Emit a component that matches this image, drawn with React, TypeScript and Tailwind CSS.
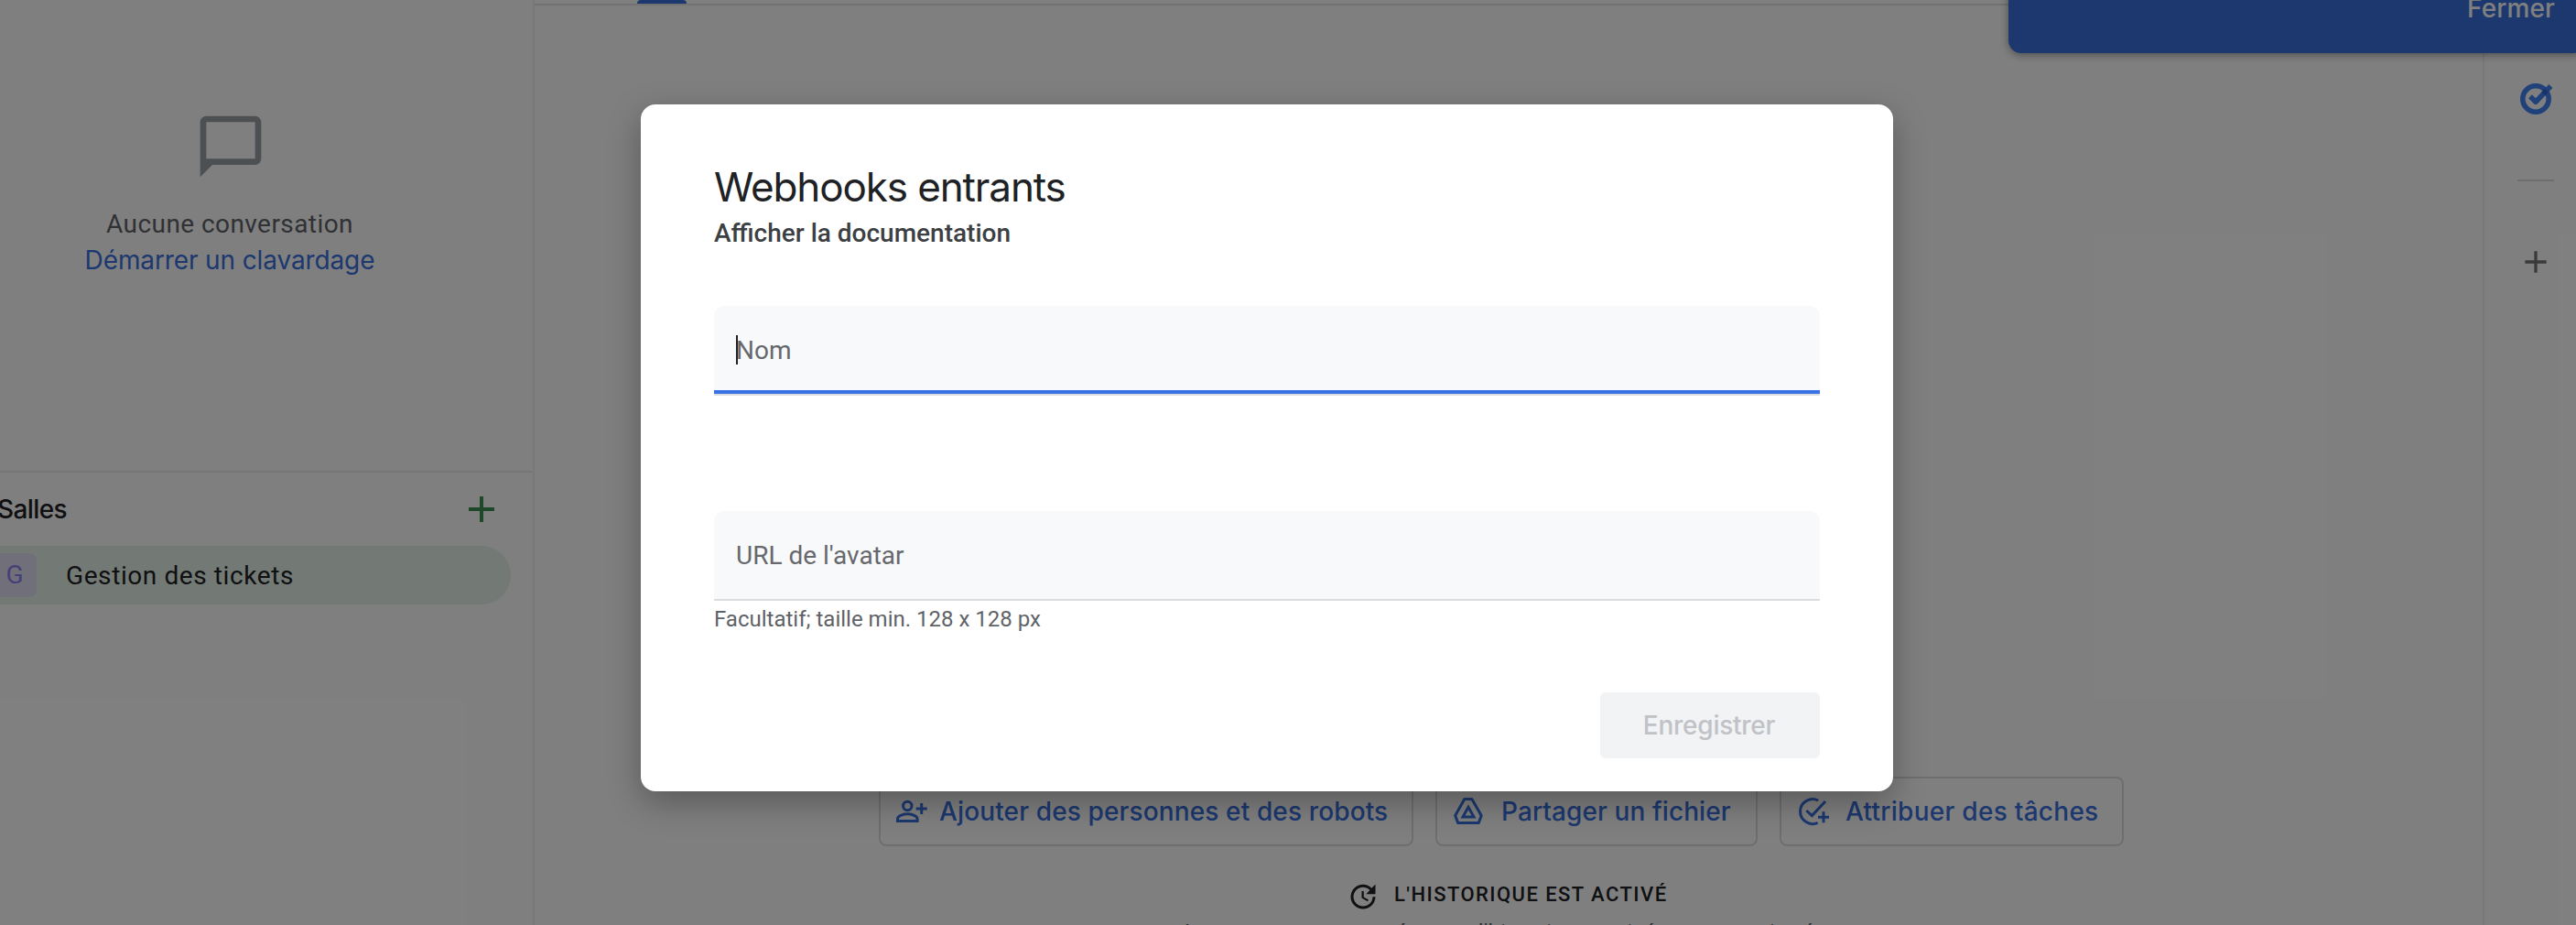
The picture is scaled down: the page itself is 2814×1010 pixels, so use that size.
import React from "react";

function Field({ label, focused }: { label: string; focused?: boolean }) {
  return (
    <div className="flex h-[98px] flex-col overflow-hidden rounded-t-[10px] bg-[#f8f9fb]">
      <div className={focused ? "flex h-[92px] items-center pl-6 pt-1" : "flex h-24 items-center pl-6"}>
        {focused && <span className="-mr-0.5 h-8 w-0.5 bg-[#202124]" />}
        <span className="pt-0.5 text-[28px] leading-10 text-[#66686c]">{label}</span>
      </div>
      {focused && <div className="h-1 bg-[#3973e3]" />}
      <div className="h-0.5 bg-[#dadce0]" />
    </div>
  );
}

function Action({
  className,
  textClass,
  label,
  children,
}: {
  className: string;
  textClass: string;
  label: string;
  children: React.ReactNode;
}) {
  return (
    <div
      className={
        "flex h-[76px] shrink-0 items-center rounded-lg border-2 border-[#dadce0] pl-3.5 text-[#3870de] " + className
      }
    >
      <svg className="h-9 w-10 shrink-0" viewBox="0 0 40 36" fill="none" stroke="currentColor" strokeWidth="3">
        {children}
      </svg>
      <span className={"whitespace-nowrap font-['Inter',sans-serif] text-[28px] font-medium leading-10 " + textClass}>
        {label}
      </span>
    </div>
  );
}

function Sidebar() {
  return (
    <aside className="flex w-[584px] shrink-0 flex-col border-r-2 border-[#f0f0f0]">
      <div className="flex h-[516px] shrink-0 flex-col items-center border-b-2 border-[#ececec] pr-[80px] pt-[120px]">
        <svg className="ml-0.5 h-20 w-20" viewBox="0 0 24 24" fill="#9aa0a6">
          <path d="M20 2H4c-1.100 0-2 .9-2 2v18l4-4h14c1.100 0 2-.9 2-2V4c0-1.100-.9-2-2-2zm0 14H4V4h16v12z" />
        </svg>
        <p className="mt-[25px] text-[28px] leading-10 tracking-[0.43px] text-[#5f6368]">Aucune conversation</p>
        <p className="-mt-px font-['Inter',sans-serif] text-[28px] leading-10 tracking-[-0.12px] text-[#3870de]">
          Démarrer un clavardage
        </p>
      </div>
      <div className="flex h-20 shrink-0 items-center justify-between pr-8">
        <span className="-ml-[3px] font-['Inter',sans-serif] text-[28px] font-medium leading-10 tracking-[-0.6px] text-[#202124]">
          Salles
        </span>
        <svg className="h-12 w-12" viewBox="0 0 24 24" fill="#3f8f55">
          <path d="M19 13h-6v6h-2v-6H5v-2h6V5h2v6h6v2z" />
        </svg>
      </div>
      <div className="flex h-16 w-[558px] shrink-0 items-center rounded-r-full bg-[#e6f4ea]">
        <span className="-ml-2 flex h-12 w-12 items-center justify-center rounded-lg bg-[#e2dff2] text-[28px] text-[#8a80ee]">
          G
        </span>
        <span className="ml-8 pt-0.5 text-[28px] leading-10 tracking-[0.59px] text-[#202124]">Gestion des tickets</span>
      </div>
    </aside>
  );
}

function Conversation() {
  return (
    <main className="flex min-w-0 flex-1 flex-col">
      <div className="h-1.5 shrink-0 border-b-2 border-[#e4e4e4] pl-28">
        <div className="h-1 w-[54px] rounded-t-sm bg-[#3870de]" />
      </div>
      <div className="flex-1" />
      <div className="h-[162px] shrink-0 overflow-hidden">
        <div className="flex gap-6 pl-[376px]">
          <Action className="w-[584px]" textClass="ml-2.5 tracking-[0.13px]" label="Ajouter des personnes et des robots">
            <circle cx="15.3" cy="12" r="4.700" />
            <path d="M4.500 28.500v-2.500c0-3.400 7-5.300 10.800-5.300s10.800 1.900 10.800 5.300v2.500z" />
            <path d="M30.700 9v12M24.700 15h12" />
          </Action>
          <Action className="w-[352px]" textClass="ml-4 tracking-[0.09px]" label="Partager un fichier">
            <path strokeLinejoin="round" d="M15.800 4.500h8.100L34.200 22.600 31.200 30.600H8.700L5.700 22.600z" />
            <path d="M20 13.300 26 24H14z" />
          </Action>
          <Action className="w-[376px]" textClass="ml-4 tracking-[0.27px]" label="Attribuer des tâches">
            <path d="M26.200 6A13.500 13.500 0 1 0 25.700 30.300" />
            <path d="M13.300 17 19.400 22.600 34 7" />
            <path d="M32 18.300v12M26 24.300h12" />
          </Action>
        </div>
        <div className="mt-8 flex h-10 items-center gap-4 pl-[887px] text-[#202124]">
          <svg className="mt-1.5 h-9 w-9" viewBox="0 0 24 24" fill="currentColor">
            <path d="M21 10.120h-6.780l2.740-2.820c-2.730-2.700-7.150-2.800-9.880-.1-2.730 2.710-2.730 7.080 0 9.790s7.150 2.710 9.880 0C18.320 15.650 19 14.080 19 12.100h2c0 1.980-.88 4.550-2.640 6.290-3.510 3.480-9.210 3.480-12.720 0-3.500-3.470-3.530-9.110-.02-12.580s9.140-3.470 12.650 0L21 3v7.120zM12.500 8v4.250l3.500 2.080-.72 1.210L11 13V8h1.500z" />
          </svg>
          <span className="text-[22px] font-medium tracking-[1.44px]">L'HISTORIQUE EST ACTIVÉ</span>
        </div>
        <p className="whitespace-nowrap pl-[710px] text-2xl leading-[44px] tracking-[0.45px] text-[#5f6368]">
          Les messages envoyés avec l'historique activé sont enregistrés
        </p>
      </div>
    </main>
  );
}

function Rail() {
  return (
    <div className="flex w-[102px] shrink-0 flex-col items-center border-l-2 border-[#f0f0f0] pl-3 pt-[84px]">
      <svg className="h-12 w-12" viewBox="0 0 48 48" fill="none" stroke="#4083f5" strokeWidth="5.600">
        <circle cx="24" cy="24" r="14.200" />
        <path strokeLinejoin="round" d="M18 21.200 24 27.200 40.400 10" />
        <path stroke="#3064cc" d="M32.300 18.500 36 14.600" />
      </svg>
      <div className="mt-16 h-0.5 w-10 shrink-0 bg-[#dadce0]" />
      <svg className="mt-[68px] h-10 w-10" viewBox="0 0 24 24" fill="#757575">
        <path d="M19 13h-6v6h-2v-6H5v-2h6V5h2v6h6v2z" />
      </svg>
    </div>
  );
}

function WebhookDialog() {
  return (
    <div className="absolute left-[700px] top-[114px] flex h-[750px] w-[1368px] flex-col rounded-2xl bg-white px-20 pt-[62px] shadow-[0_12px_36px_rgba(0,0,0,0.3)]">
      <h1 className="font-['Inter',sans-serif] text-[44px] leading-[56px] tracking-[-1.12px] text-[#202124]">
        Webhooks entrants
      </h1>
      <p className="mt-[3px] text-[28px] font-medium leading-10 text-[#3c4043]">Afficher la documentation</p>
      <div className="mt-[59px]">
        <Field label="Nom" focused />
      </div>
      <div className="mt-[126px]">
        <Field label="URL de l'avatar" />
      </div>
      <p className="mt-1 text-2xl leading-8 text-[#5f6368]">Facultatif; taille min. 128 x 128 px</p>
      <button className="mt-16 h-[72px] w-60 self-end rounded-md bg-[#f1f3f4] pr-0.5 font-['Inter',sans-serif] text-[28px] font-medium leading-10 tracking-[-0.25px] text-[#c0c2c7]">
        Enregistrer
      </button>
    </div>
  );
}

export default function App() {
  return (
    <div className="relative h-[1010px] w-[2814px] overflow-hidden bg-white font-['Roboto',sans-serif]">
      <div className="flex h-full">
        <Sidebar />
        <Conversation />
        <Rail />
      </div>
      <div className="absolute -right-2.5 -top-[42px] flex h-[100px] w-[630px] items-center justify-end rounded-[14px] bg-[#3870de] pr-[33px] pt-0.5 shadow-[0_2px_10px_rgba(0,0,0,0.4)]">
        <span className="font-['Inter',sans-serif] text-[28px] font-medium leading-10 tracking-[0.11px] text-white">
          Fermer
        </span>
      </div>
      <div className="absolute inset-0 bg-black/50" />
      <WebhookDialog />
    </div>
  );
}
